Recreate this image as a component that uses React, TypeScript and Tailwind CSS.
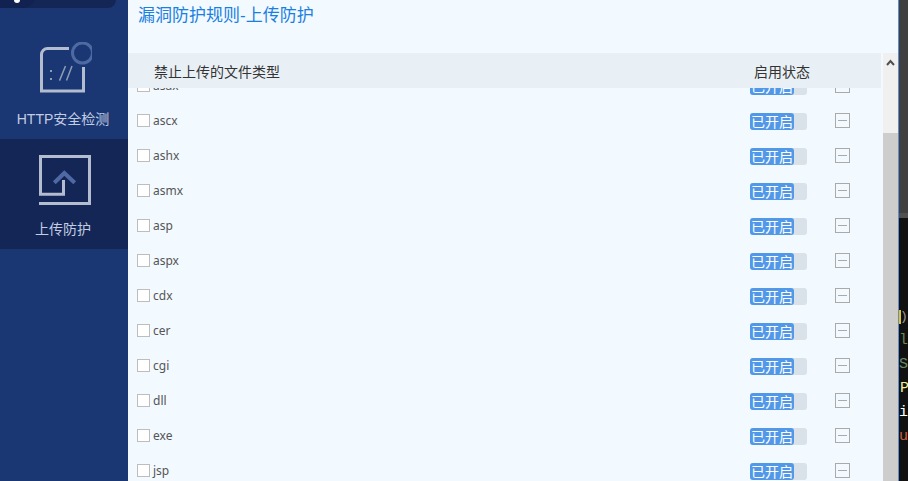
const rows = ['asax', 'ascx', 'ashx', 'asmx', 'asp', 'aspx', 'cdx', 'cer', 'cgi', 'dll', 'exe', 'jsp'];

function Row({ name }: { name: string }) {
  return (
    <div className="flex h-[35px] shrink-0 items-center pl-[9px]">
      <span className="h-[13px] w-[13px] border border-[#bdbdbd] bg-white" />
      <span className="ml-[3px] font-['Noto_Sans',sans-serif] text-[12px] text-[#555]">{name}</span>
      <div className="ml-auto flex h-[17px] w-[57px] translate-y-[1px] rounded-[3px] bg-[#d8e2e8]">
        <span className="flex w-[44px] items-center justify-center rounded-[3px] bg-[#5199e8] text-[14px] leading-none text-white">已开启</span>
      </div>
      <div className="ml-[28px] mr-[31px] flex h-[15px] w-[15px] items-center justify-center border border-[#aaa]">
        <span className="h-px w-[9px] bg-[#aaa]" />
      </div>
    </div>
  );
}

export default function App() {
  return (
    <div className="flex h-[481px] w-[908px] overflow-hidden font-['Liberation_Sans','Noto_Sans_CJK_SC',sans-serif]">
      <aside className="w-[128px] shrink-0 bg-[#1a3673]">
        <div className="relative h-[8px] w-[116px] overflow-hidden rounded-br-[22px] bg-[#142656]">
          <div className="absolute left-[-10px] top-[-20px] h-[28px] w-[46px] rounded-full bg-[#112150]" />
          <div className="absolute left-[14px] top-[-3px] h-[6px] w-[6px] rounded-full bg-white" />
        </div>
        <div className="flex h-[131px] flex-col items-center pt-[34px]">
          <svg width="56" height="54" viewBox="0 0 56 54" fill="none">
            <path d="M33 6.500H11.500a6 6 0 0 0-6 6V49H47.500V25" stroke="#b4bccf" strokeWidth="3" />
            <circle cx="46.500" cy="11" r="10" stroke="#4f6aa3" strokeWidth="3" />
            <rect x="14" y="28" width="2" height="2" fill="#8f9cb8" />
            <rect x="14" y="36" width="2" height="2" fill="#8f9cb8" />
            <path d="M23.500 38.600L29.500 24M30.500 38.600L36 24" stroke="#8f9cb8" strokeWidth="1.500" />
          </svg>
          <span className="mr-[2px] mt-[13px] text-[14px] leading-[20px] text-[#c3cde2]">HTTP安全检测</span>
        </div>
        <div className="flex h-[110px] flex-col items-center bg-[#142656] pt-[16px]">
          <svg width="54" height="50" viewBox="0 0 54 50" fill="none">
            <path d="M2 48.500H52.500V1.500H3.500V39.300H26.500V25" stroke="#b4bccf" strokeWidth="3" />
            <path d="M17.300 27.700L27.300 18L37.700 27.700" stroke="#4f6aa3" strokeWidth="4" />
          </svg>
          <span className="mr-[2px] mt-[14px] text-[14px] leading-[20px] text-[#c3cde2]">上传防护</span>
        </div>
      </aside>
      <main className="flex w-[770px] shrink-0 flex-col bg-[#f2f9ff]">
        <h1 className="h-[53px] pl-[10px] pt-[6px] text-[17px] leading-[20px] font-normal text-[#1a7fe0]">漏洞防护规则-上传防护</h1>
        <div className="flex min-h-0 flex-1">
          <div className="flex w-[753px] flex-col">
            <div className="relative z-10 flex h-[35px] shrink-0 items-center bg-[#e9f0f5] pl-[26px] pt-[3px] text-[14px] text-[#333]">
              <span>禁止上传的文件类型</span>
              <span className="ml-auto mr-[71px]">启用状态</span>
            </div>
            <div className="flex min-h-0 flex-1 flex-col overflow-hidden">
              <div className="mt-[-20px] flex flex-col">
                {rows.map((r) => (
                  <Row key={r} name={r} />
                ))}
              </div>
            </div>
          </div>
          <div className="ml-[2px] flex w-[15px] flex-col bg-[#f0f0f0]">
            <div className="flex h-[80px] justify-center pt-[6px]">
              <svg width="9" height="7" viewBox="0 0 9 7" fill="none">
                <path d="M1 6l3.500-4 3.500 4" stroke="#505050" strokeWidth="2" />
              </svg>
            </div>
            <div className="flex-1 bg-[#cdcdcd]" />
          </div>
        </div>
      </main>
      <div className="w-px shrink-0 bg-[#5b8ed0]" />
      <div className="flex flex-1 flex-col overflow-hidden bg-[#111] font-['Liberation_Mono',monospace] text-[15px] leading-[24px]">
        <div className="h-[213px] shrink-0 bg-[#404040]" />
        <div className="h-[5px] shrink-0 bg-[#505050]" />
        <div className="flex flex-col whitespace-pre pt-[87px]">
          <div className="flex h-[24px] items-center text-[#9a9a9a]">
            <span className="h-[14px] w-[2px] bg-[#e8c020]" />
            <span className="ml-[-1px] text-[13px]">)</span>
          </div>
          <span className="text-[#6a8a55]">l</span>
          <span className="text-[#6a8a65]">S</span>
          <span className="ml-[1px] text-[#f0f0a0]">P</span>
          <span className="text-white">i</span>
          <span className="text-[#ce5c3c]">u</span>
        </div>
      </div>
    </div>
  );
}
